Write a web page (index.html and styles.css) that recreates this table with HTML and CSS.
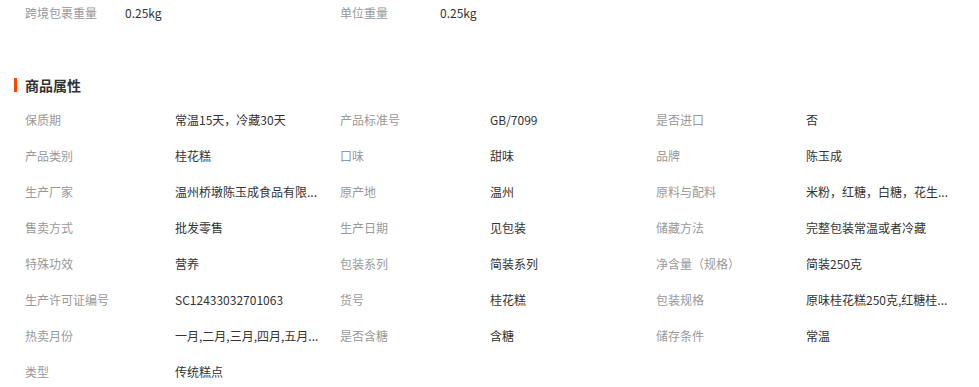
FILE: index.html
```html
<!DOCTYPE html>
<html lang="zh-CN">
<head>
<meta charset="utf-8">
<title>商品属性</title>
<link rel="stylesheet" href="styles.css">
</head>
<body>
<div class="page">
  <div class="weights">
    <div class="wcell"><span class="wlabel">跨境包裹重量</span><span class="wvalue">0.25kg</span></div>
    <div class="wcell"><span class="wlabel">单位重量</span><span class="wvalue">0.25kg</span></div>
  </div>

  <h2 class="section-title">商品属性</h2>

  <div class="attrs">
    <div class="cell"><span class="label">保质期</span><span class="value">常温15天，冷藏30天</span></div>
    <div class="cell"><span class="label">产品标准号</span><span class="value">GB/7099</span></div>
    <div class="cell"><span class="label">是否进口</span><span class="value">否</span></div>

    <div class="cell"><span class="label">产品类别</span><span class="value">桂花糕</span></div>
    <div class="cell"><span class="label">口味</span><span class="value">甜味</span></div>
    <div class="cell"><span class="label">品牌</span><span class="value">陈玉成</span></div>

    <div class="cell"><span class="label">生产厂家</span><span class="value" title="温州桥墩陈玉成食品有限公司">温州桥墩陈玉成食品有限...</span></div>
    <div class="cell"><span class="label">原产地</span><span class="value">温州</span></div>
    <div class="cell"><span class="label">原料与配料</span><span class="value">米粉，红糖，白糖，花生...</span></div>

    <div class="cell"><span class="label">售卖方式</span><span class="value">批发零售</span></div>
    <div class="cell"><span class="label">生产日期</span><span class="value">见包装</span></div>
    <div class="cell"><span class="label">储藏方法</span><span class="value">完整包装常温或者冷藏</span></div>

    <div class="cell"><span class="label">特殊功效</span><span class="value">营养</span></div>
    <div class="cell"><span class="label">包装系列</span><span class="value">简装系列</span></div>
    <div class="cell"><span class="label">净含量（规格）</span><span class="value">简装250克</span></div>

    <div class="cell"><span class="label">生产许可证编号</span><span class="value">SC12433032701063</span></div>
    <div class="cell"><span class="label">货号</span><span class="value">桂花糕</span></div>
    <div class="cell"><span class="label">包装规格</span><span class="value">原味桂花糕250克,红糖桂...</span></div>

    <div class="cell"><span class="label">热卖月份</span><span class="value">一月,二月,三月,四月,五月...</span></div>
    <div class="cell"><span class="label">是否含糖</span><span class="value">含糖</span></div>
    <div class="cell"><span class="label">储存条件</span><span class="value">常温</span></div>

    <div class="cell"><span class="label">类型</span><span class="value">传统糕点</span></div>
  </div>
</div>
</body>
</html>
```

FILE: styles.css
```css
html, body {
  margin: 0;
  padding: 0;
  background: #fff;
}

body {
  font-family: "Microsoft YaHei", "Noto Sans CJK SC", "Noto Sans", sans-serif;
  font-size: 12px;
  color: #333;
}

.page {
  width: 979px;
  overflow: hidden;
}

.weights {
  display: grid;
  grid-template-columns: 315px 316px 315px;
  padding-left: 25px;
  height: 26px;
  line-height: 26px;
}

.wcell {
  display: flex;
  white-space: nowrap;
}

.wlabel {
  width: 100px;
  color: #999;
  flex: none;
}

.wvalue {
  color: #333;
}

.section-title {
  margin: 49px 0 7px 14px;
  height: 20px;
  line-height: 20px;
  font-size: 14px;
  font-weight: bold;
  color: #333;
  display: flex;
  align-items: center;
}

.section-title::before {
  content: "";
  display: block;
  width: 3px;
  height: 14px;
  background: #ff4400;
  margin-right: 8px;
}

.attrs {
  display: grid;
  grid-template-columns: 315px 316px 315px;
  grid-auto-rows: 36px;
  padding-left: 25px;
  line-height: 36px;
}

.cell {
  display: flex;
  white-space: nowrap;
  min-width: 0;
}

.label {
  width: 150px;
  flex: none;
  color: #999;
}

.value {
  max-width: 150px;
  overflow: hidden;
  text-overflow: ellipsis;
  color: #333;
}
```
